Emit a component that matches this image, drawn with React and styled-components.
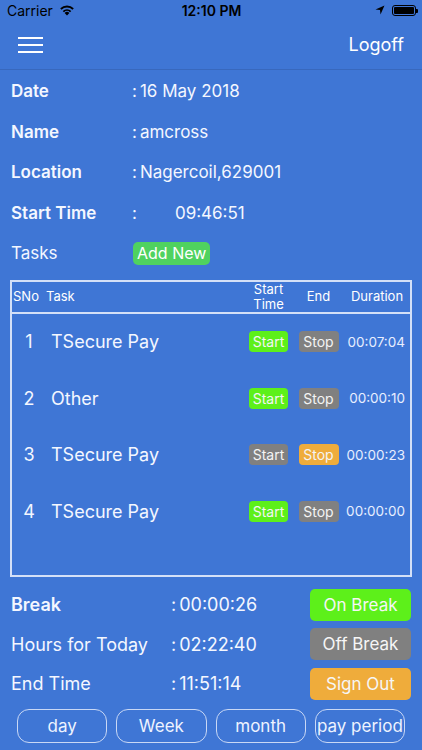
import React from 'react'
import styled, { createGlobalStyle } from 'styled-components'

const GlobalStyle = createGlobalStyle`
  body {
    margin: 0;
    background: #3f76d5;
    font-family: Inter, "Noto Sans", sans-serif;
    color: #f4f7ff;
  }
`

const Screen = styled.div`
  width: 422px;
  height: 750px;
  overflow: hidden;
  background: #3f76d5;
  display: flex;
  flex-direction: column;
`

const StatusBar = styled.div`
  height: 20px;
  display: flex;
  align-items: center;
  padding: 0 6px 0 7px;
  color: #000;
  font-size: 14px;
`

const Carrier = styled.div`
  display: flex;
  align-items: center;
  gap: 6px;
  flex: 1;
`

const Clock = styled.div`
  font-weight: 600;
  flex: 1;
  text-align: center;
`

const StatusRight = styled.div`
  flex: 1;
  display: flex;
  justify-content: flex-end;
  align-items: center;
  gap: 7px;
`

const Battery = styled.div`
  width: 24px;
  height: 11px;
  border: 1px solid #000;
  border-radius: 3px;
  padding: 1px;
  box-sizing: border-box;
  position: relative;

  &::before {
    content: '';
    display: block;
    width: 100%;
    height: 100%;
    background: #000;
    border-radius: 1px;
  }

  &::after {
    content: '';
    position: absolute;
    right: -3px;
    top: 3px;
    width: 2px;
    height: 4px;
    background: #000;
    border-radius: 0 1px 1px 0;
  }
`

const NavBar = styled.div`
  height: 49px;
  display: flex;
  align-items: center;
  justify-content: space-between;
  padding: 0 18px;
  border-bottom: 1px solid #3868bd;
`

const Logoff = styled.div`
  font-size: 18px;
  color: #fff;
`

const Form = styled.div`
  padding: 1px 11px 0;
`

const FieldRow = styled.div`
  height: 40.5px;
  display: flex;
  align-items: center;
  font-size: 17px;
`

const Label = styled.div`
  width: ${(p) => p.width || 121}px;
  font-weight: ${(p) => (p.regular ? 400 : 600)};
  font-size: ${(p) => p.size || 17}px;
`

const Value = styled.div`
  display: flex;
  font-size: ${(p) => p.size || 17}px;

  span {
    margin-right: 3px;
  }
`

const Indented = styled.div`
  padding-left: ${(p) => p.indent || 0}px;
`

const AddNew = styled.div`
  background: #4fd25f;
  color: #fff;
  font-size: 16px;
  border-radius: 5px;
  padding: 0 4px;
  height: 23px;
  line-height: 23px;
  margin-left: 1px;
`

const Table = styled.div`
  margin: 6px 10px 0;
  height: 297px;
  box-sizing: border-box;
  border: 2px solid #d4e0f7;
`

const Grid = styled.div`
  display: grid;
  grid-template-columns: 34px 1fr 49px 51px 66px;
  align-items: center;
`

const HeaderRow = styled(Grid)`
  height: 30px;
  border-bottom: 2px solid #d4e0f7;
  font-size: 13px;
  color: #fff;
`

const HeadCell = styled.div`
  text-align: ${(p) => p.align || 'center'};
  line-height: 15px;
  padding-left: ${(p) => p.pad || 0}px;
`

const BodyRow = styled(Grid)`
  height: 56.5px;
`

const Num = styled.div`
  font-size: 18px;
  text-align: center;
`

const TaskName = styled.div`
  font-size: 18px;
  padding-left: 5px;
`

const Chip = styled.div`
  justify-self: center;
  width: ${(p) => p.w}px;
  height: 21px;
  line-height: 21px;
  text-align: center;
  border-radius: 4px;
  font-size: 14px;
  color: #f4f4f4;
  background: ${(p) => p.bg};
`

const Duration = styled.div`
  font-size: 13.5px;
  text-align: right;
  padding-right: 5px;
  color: #e8eeff;
`

const Summary = styled.div`
  padding: 12px 11px 0;
  display: flex;
  flex-direction: column;
  gap: 7.5px;
`

const SummaryRow = styled.div`
  height: 32px;
  display: flex;
  align-items: center;
`

const ActionButton = styled.div`
  margin-left: auto;
  width: 101px;
  height: 32px;
  line-height: 32px;
  text-align: center;
  border-radius: 5px;
  font-size: 17px;
  color: #f6f6f6;
  background: ${(p) => p.bg};
`

const Periods = styled.div`
  display: flex;
  gap: 9px;
  padding: 9px 17px 0;
`

const Pill = styled.div`
  flex: 1;
  height: 34px;
  box-sizing: border-box;
  border: 1.5px solid #c9d8f5;
  border-radius: 12px;
  display: flex;
  align-items: center;
  justify-content: center;
  font-size: 17px;
  color: #eef3ff;
`

const Wifi = () => (
  <svg width="16" height="12" viewBox="0 0 16 12">
    <path d="M8 11.5 L5.6 8.9 A3.4 3.4 0 0 1 10.4 8.9 Z" fill="#000" />
    <path d="M3.7 6.9 A6.2 6.2 0 0 1 12.3 6.9 L11 8.3 A4.3 4.3 0 0 0 5 8.3 Z" fill="#000" />
    <path d="M1.2 4.3 A9.8 9.8 0 0 1 14.8 4.3 L13.5 5.7 A7.8 7.8 0 0 0 2.5 5.7 Z" fill="#000" />
  </svg>
)

const Arrow = () => (
  <svg width="10" height="10" viewBox="0 0 10 10">
    <path d="M9.5 0.5 L0.5 4.5 L5 5 L5.5 9.5 Z" fill="#000" />
  </svg>
)

const Hamburger = () => (
  <svg width="26" height="16" viewBox="0 0 26 16">
    <rect x="0" y="0" width="25" height="2" fill="#fff" />
    <rect x="0" y="7" width="25" height="2" fill="#fff" />
    <rect x="0" y="14" width="25" height="2" fill="#fff" />
  </svg>
)

const GREEN = '#5df01a'
const GRAY = '#808080'
const ORANGE = '#efac3b'

const tasks = [
  { no: 1, name: 'TSecure Pay', start: GREEN, stop: GRAY, time: '00:07:04' },
  { no: 2, name: 'Other', start: GREEN, stop: GRAY, time: '00:00:10' },
  { no: 3, name: 'TSecure Pay', start: GRAY, stop: ORANGE, time: '00:00:23' },
  { no: 4, name: 'TSecure Pay', start: GREEN, stop: GRAY, time: '00:00:00' },
]

const fields = [
  { label: 'Date', value: '16 May 2018' },
  { label: 'Name', value: 'amcross' },
  { label: 'Location', value: 'Nagercoil,629001' },
  { label: 'Start Time', value: '09:46:51', indent: 35 },
]

const App = () => (
  <Screen>
    <GlobalStyle />
    <StatusBar>
      <Carrier>
        Carrier <Wifi />
      </Carrier>
      <Clock>12:10 PM</Clock>
      <StatusRight>
        <Arrow />
        <Battery />
      </StatusRight>
    </StatusBar>
    <NavBar>
      <Hamburger />
      <Logoff>Logoff</Logoff>
    </NavBar>

    <Form>
      {fields.map((f) => (
        <FieldRow key={f.label}>
          <Label>{f.label}</Label>
          <Value>
            <span>:</span>
            <Indented indent={f.indent}>{f.value}</Indented>
          </Value>
        </FieldRow>
      ))}
      <FieldRow>
        <Label regular>Tasks</Label>
        <AddNew>Add New</AddNew>
      </FieldRow>
    </Form>

    <Table>
      <HeaderRow>
        <HeadCell align="left" pad={1}>SNo</HeadCell>
        <HeadCell align="left">Task</HeadCell>
        <HeadCell>
          Start
          <br />
          Time
        </HeadCell>
        <HeadCell>End</HeadCell>
        <HeadCell>Duration</HeadCell>
      </HeaderRow>
      {tasks.map((t) => (
        <BodyRow key={t.no}>
          <Num>{t.no}</Num>
          <TaskName>{t.name}</TaskName>
          <Chip w={39} bg={t.start}>Start</Chip>
          <Chip w={40} bg={t.stop}>Stop</Chip>
          <Duration>{t.time}</Duration>
        </BodyRow>
      ))}
    </Table>

    <Summary>
      <SummaryRow>
        <Label width={160} size={18}>Break</Label>
        <Value size={18}>
          <span>:</span>00:00:26
        </Value>
        <ActionButton bg={GREEN}>On Break</ActionButton>
      </SummaryRow>
      <SummaryRow>
        <Label width={160} size={18} regular>Hours for Today</Label>
        <Value size={18}>
          <span>:</span>02:22:40
        </Value>
        <ActionButton bg={GRAY}>Off Break</ActionButton>
      </SummaryRow>
      <SummaryRow>
        <Label width={160} size={18} regular>End Time</Label>
        <Value size={18}>
          <span>:</span>11:51:14
        </Value>
        <ActionButton bg={ORANGE}>Sign Out</ActionButton>
      </SummaryRow>
    </Summary>

    <Periods>
      <Pill>day</Pill>
      <Pill>Week</Pill>
      <Pill>month</Pill>
      <Pill>pay period</Pill>
    </Periods>
  </Screen>
)

export default App
